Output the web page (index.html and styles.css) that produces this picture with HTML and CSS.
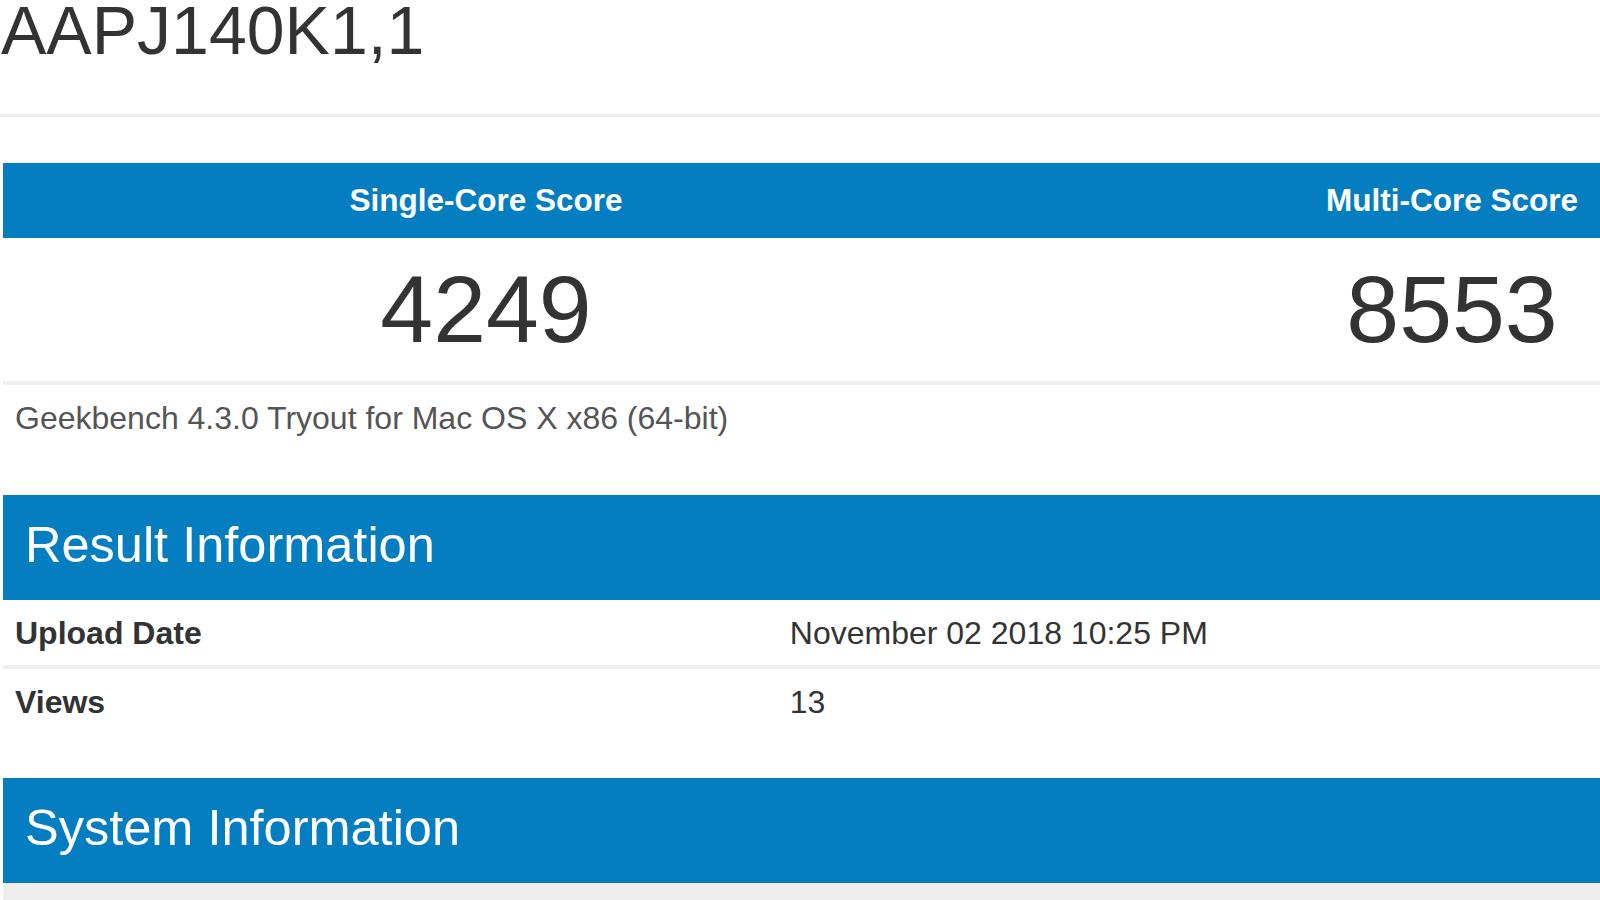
FILE: index.html
```html
<!DOCTYPE html>
<html lang="en">
<head>
    <meta charset="UTF-8">
    <meta name="viewport" content="width=device-width, initial-scale=1.0">
    <title>AAPJ140K1,1 - Geekbench Browser</title>
    <link rel="stylesheet" href="styles.css">
</head>
<body>
<div class="page">
    <h1 class="device-name">AAPJ140K1,1</h1>

    <div class="scores">
        <div class="score-head">
            <div>Single-Core Score</div>
            <div>Multi-Core Score</div>
        </div>
        <div class="score-values">
            <div>4249</div>
            <div>8553</div>
        </div>
    </div>
    <p class="platform">Geekbench 4.3.0 Tryout for Mac OS X x86 (64-bit)</p>

    <section class="info">
        <h2 class="info-head">Result Information</h2>
        <div class="info-row">
            <div class="info-label">Upload Date</div>
            <div class="info-value">November 02 2018 10:25 PM</div>
        </div>
        <div class="info-row">
            <div class="info-label">Views</div>
            <div class="info-value">13</div>
        </div>
    </section>

    <section class="info">
        <h2 class="info-head">System Information</h2>
        <div class="info-stripe"></div>
    </section>
</div>
</body>
</html>
```

FILE: styles.css
```css
html, body {
    overflow: hidden;
}

body {
    margin: 0;
    padding: 0;
    font-family: 'Liberation Sans', Arial, sans-serif;
    background-color: #fff;
    color: #333;
}

.page {
    width: 1932px;
    margin-left: 3px;
}

.device-name {
    margin: 0 0 0 -3px;
    padding: 2px 0 56px 1px;
    font-size: 68px;
    font-weight: normal;
    line-height: 56px;
    border-bottom: 3px solid #eee;
}

.scores {
    margin-top: 46px;
    border-bottom: 4px solid #eee;
}

.score-head,
.score-values {
    display: grid;
    grid-template-columns: 1fr 1fr;
    text-align: center;
}

.score-head {
    background-color: #057ec1;
    color: #fff;
    font-size: 31.5px;
    font-weight: bold;
    line-height: 75px;
}

.score-values {
    font-size: 95px;
    line-height: 143px;
    color: #333;
}

.platform {
    margin: 0 0 53px 0;
    padding: 9px 12px 0;
    font-size: 32px;
    line-height: 48px;
    color: #555;
}

.info {
    margin-bottom: 44px;
}

.info-head {
    margin: 0;
    background-color: #057ec1;
    color: #fff;
    font-size: 50.5px;
    font-weight: normal;
    line-height: 100px;
    padding: 0 0 5px 22px;
}

.info-row {
    display: grid;
    grid-template-columns: 40% 60%;
    font-size: 32px;
    line-height: 63px;
    padding-top: 2px;
}

.info-row + .info-row {
    border-top: 4px solid #eee;
}

.info-label {
    font-weight: bold;
    padding-left: 12px;
}

.info-value {
    padding-left: 14px;
    color: #333;
}

.info-stripe {
    height: 40px;
    background-color: #eee;
}
```
